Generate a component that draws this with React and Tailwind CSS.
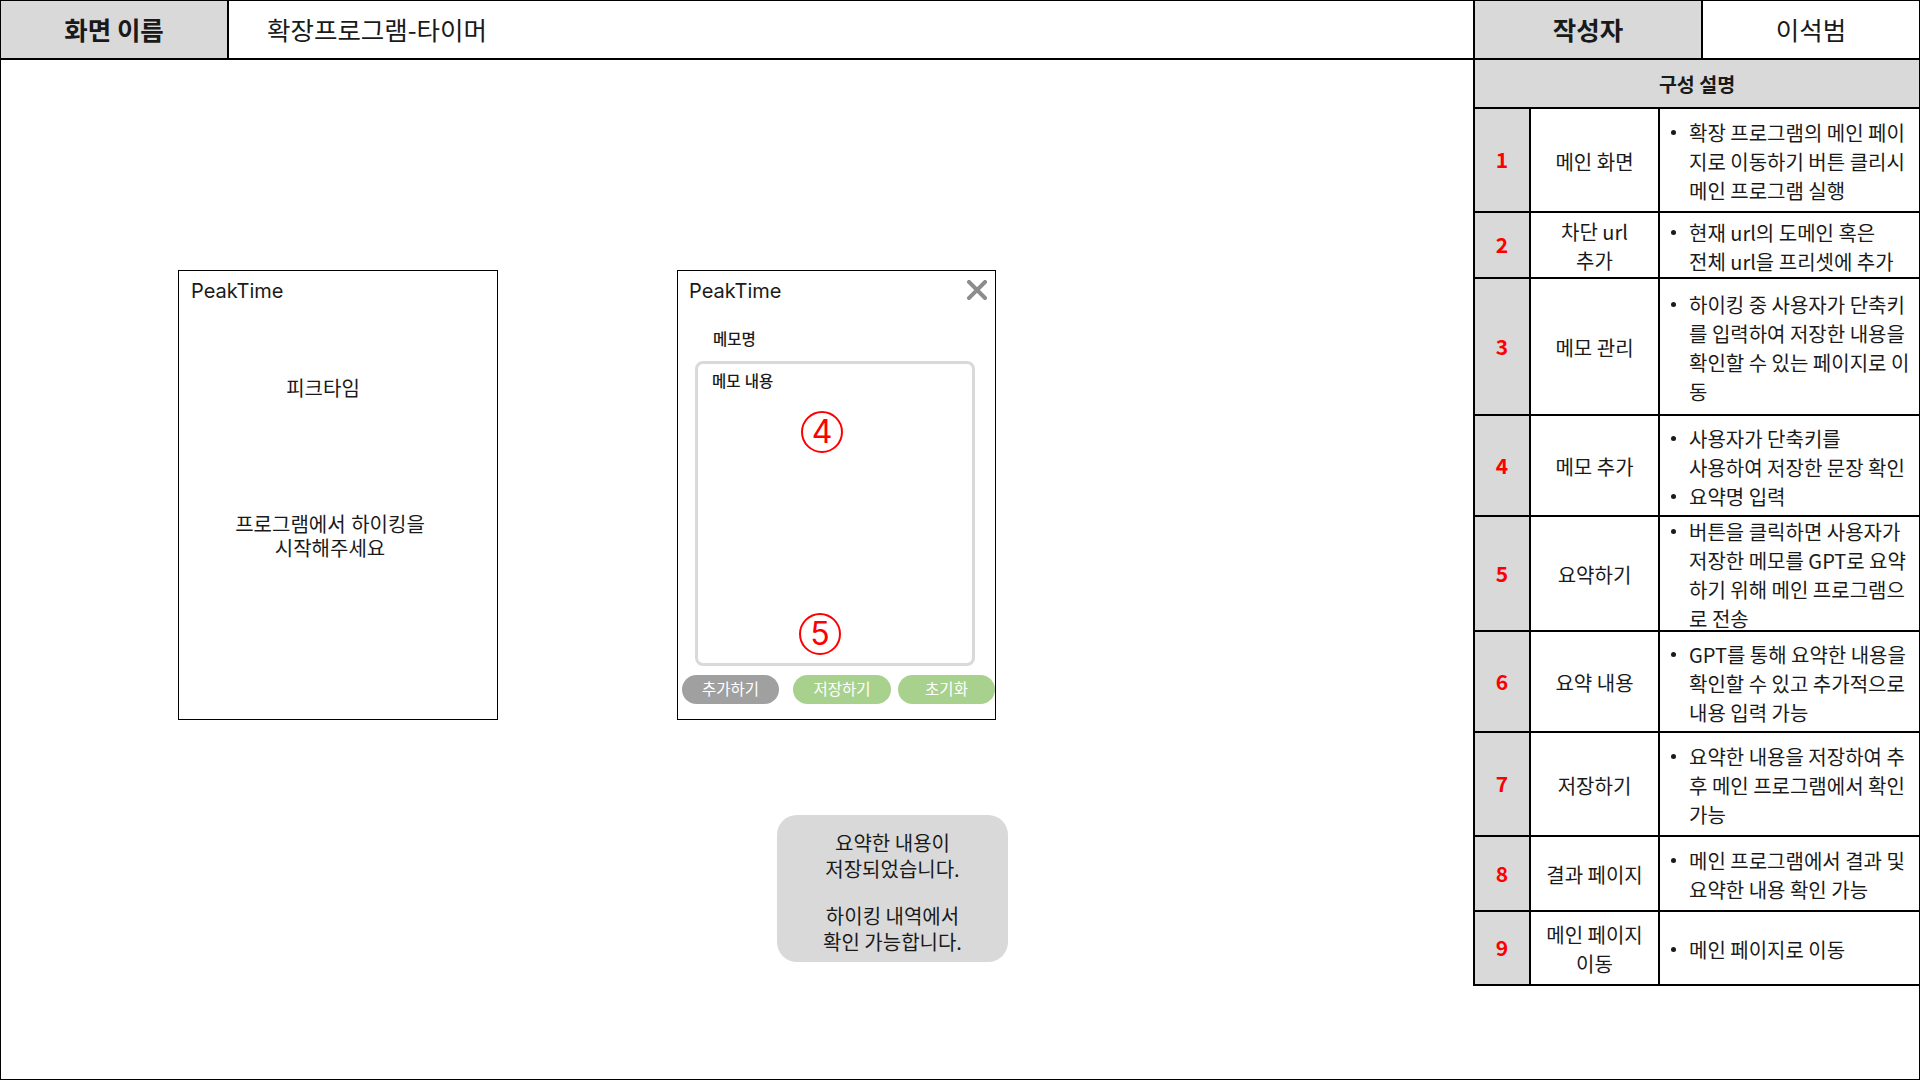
const rows = [
  { n: '1', h: 'h-[104px]', label: ['메인 화면'], items: [['확장 프로그램의 메인 페이', '지로 이동하기 버튼 클리시', '메인 프로그램 실행']] },
  { n: '2', h: 'h-[66px]', label: ['차단 url', '추가'], items: [['현재 url의 도메인 혹은', '전체 url을 프리셋에 추가']] },
  { n: '3', h: 'h-[137px]', label: ['메모 관리'], items: [['하이킹 중 사용자가 단축키', '를 입력하여 저장한 내용을', '확인할 수 있는 페이지로 이', '동']] },
  { n: '4', h: 'h-[101px]', label: ['메모 추가'], items: [['사용자가 단축키를', '사용하여 저장한 문장 확인'], ['요약명 입력']] },
  { n: '5', h: 'h-[115px]', label: ['요약하기'], items: [['버튼을 클릭하면 사용자가', '저장한 메모를 GPT로 요약', '하기 위해 메인 프로그램으', '로 전송']] },
  { n: '6', h: 'h-[101px]', label: ['요약 내용'], items: [['GPT를 통해 요약한 내용을', '확인할 수 있고 추가적으로', '내용 입력 가능']] },
  { n: '7', h: 'h-[104px]', label: ['저장하기'], items: [['요약한 내용을 저장하여 추', '후 메인 프로그램에서 확인', '가능']] },
  { n: '8', h: 'h-[75px]', label: ['결과 페이지'], items: [['메인 프로그램에서 결과 및', '요약한 내용 확인 가능']] },
  { n: '9', h: 'h-[74px]', label: ['메인 페이지', '이동'], items: [['메인 페이지로 이동']] },
]

function Bullet({ lines }) {
  return (
    <div className="flex">
      <div className="w-[29px] h-[29px] flex items-center pl-[11px] shrink-0">
        <div className="w-[5px] h-[5px] rounded-full bg-[#1a1a1a]" />
      </div>
      <div>
        {lines.map((l, i) => (
          <div key={i} className="h-[29px] leading-[29px] whitespace-nowrap">{l}</div>
        ))}
      </div>
    </div>
  )
}

function Circled({ n, className }) {
  return (
    <div className={'w-[42px] h-[42px] rounded-full border-2 border-[#ff0000] flex items-center justify-center text-[#ff0000] text-[32px] leading-none ' + className}>
      {n}
    </div>
  )
}

function CloseIcon() {
  return (
    <svg width="20" height="20" viewBox="0 0 20 20">
      <path d="M2 2 L18 18 M18 2 L2 18" stroke="#8c8c8c" strokeWidth="4" strokeLinecap="square" />
    </svg>
  )
}

export default function App() {
  return (
    <div className="w-[1920px] h-[1080px] border border-black bg-white text-[#1a1a1a] font-['Noto_Sans_CJK_KR',sans-serif] flex flex-col overflow-hidden">
      {/* header */}
      <div className="flex h-[59px] border-b-2 border-black shrink-0">
        <div className="w-[228px] bg-[#d9d9d9] border-r-2 border-black flex items-center justify-center text-[25.5px] font-bold">화면 이름</div>
        <div className="w-[1244px] flex items-center pl-[38px] text-[25.5px]">확장프로그램-타이머</div>
        <div className="w-[230px] bg-[#d9d9d9] border-x-2 border-black flex items-center justify-center text-[25.5px] font-bold">작성자</div>
        <div className="flex-1 flex items-center justify-center text-[25.5px]">이석범</div>
      </div>

      <div className="flex flex-1">
        {/* canvas */}
        <div className="w-[1472px] font-['Inter','Noto_Sans_CJK_KR',sans-serif]">
          <div className="flex pl-[177px] pt-[210px] gap-[179px]">
            {/* start screen */}
            <div className="w-[320px] h-[450px] border border-black flex flex-col">
              <div className="pl-[12px] pt-[8px] text-[20px] leading-[24px]">PeakTime</div>
              <div className="mt-[73px] pr-[30px] text-center text-[20px] leading-[26px]">피크타임</div>
              <div className="mt-[111px] pr-[16px] text-center text-[20px] leading-[24px]">
                <div>프로그램에서 하이킹을</div>
                <div>시작해주세요</div>
              </div>
            </div>

            {/* memo screen */}
            <div className="w-[319px] h-[450px] border border-black flex flex-col">
              <div className="flex justify-between items-start">
                <div className="pl-[11px] pt-[8px] text-[20px] leading-[24px]">PeakTime</div>
                <div className="pt-[9px] pr-[8px]"><CloseIcon /></div>
              </div>
              <div className="mt-[26px] pl-[35px] text-[15.5px] leading-[22px] font-medium">메모명</div>
              <div className="mt-[10px] ml-[17px] w-[280px] h-[305px] border-[3px] border-[#d9d9d9] rounded-[8px] flex flex-col">
                <div className="pl-[14px] pt-[7px] text-[15.5px] leading-[22px] font-medium">메모 내용</div>
                <Circled n="4" className="ml-[103px] mt-[18px]" />
                <Circled n="5" className="ml-[101px] mt-[160px]" />
              </div>
              <div className="flex mt-[9px] pl-[4px] text-[15.5px] text-white">
                <div className="w-[97px] h-[29px] rounded-full bg-[#a0a0a0] flex items-center justify-center">추가하기</div>
                <div className="w-[98px] h-[29px] ml-[14px] rounded-full bg-[#a9d18e] flex items-center justify-center">저장하기</div>
                <div className="w-[97px] h-[29px] ml-[7px] rounded-full bg-[#a9d18e] flex items-center justify-center">초기화</div>
              </div>
            </div>
          </div>

          {/* toast */}
          <div className="ml-[776px] mt-[95px] w-[231px] h-[147px] rounded-[20px] bg-[#d9d9d9] pt-[15px] text-center text-[20px] leading-[26px] font-['Noto_Sans_CJK_KR',sans-serif]">
            <div>요약한 내용이</div>
            <div>저장되었습니다.</div>
            <div className="h-[21px]" />
            <div>하이킹 내역에서</div>
            <div>확인 가능합니다.</div>
          </div>
        </div>

        {/* description table */}
        <div className="w-[446px]">
          <div className="border-l-2 border-black">
            <div className="h-[49px] bg-[#d9d9d9] border-b-2 border-black flex items-center justify-center text-[19.5px] font-bold">구성 설명</div>
            {rows.map((r) => (
              <div key={r.n} className={'flex border-b-2 border-black ' + r.h}>
                <div className="w-[56px] bg-[#d9d9d9] border-r-2 border-black flex items-center justify-center text-[21px] font-bold text-[#ff0000]">{r.n}</div>
                <div className="w-[129px] border-r-2 border-black flex flex-col items-center justify-center pt-[2px] text-[20px]">
                  {r.label.map((l, i) => (
                    <div key={i} className="leading-[29px] whitespace-nowrap">{l}</div>
                  ))}
                </div>
                <div className="flex-1 flex flex-col justify-center pt-[3px] text-[20px]">
                  {r.items.map((lines, i) => (
                    <Bullet key={i} lines={lines} />
                  ))}
                </div>
              </div>
            ))}
          </div>
        </div>
      </div>
    </div>
  )
}
